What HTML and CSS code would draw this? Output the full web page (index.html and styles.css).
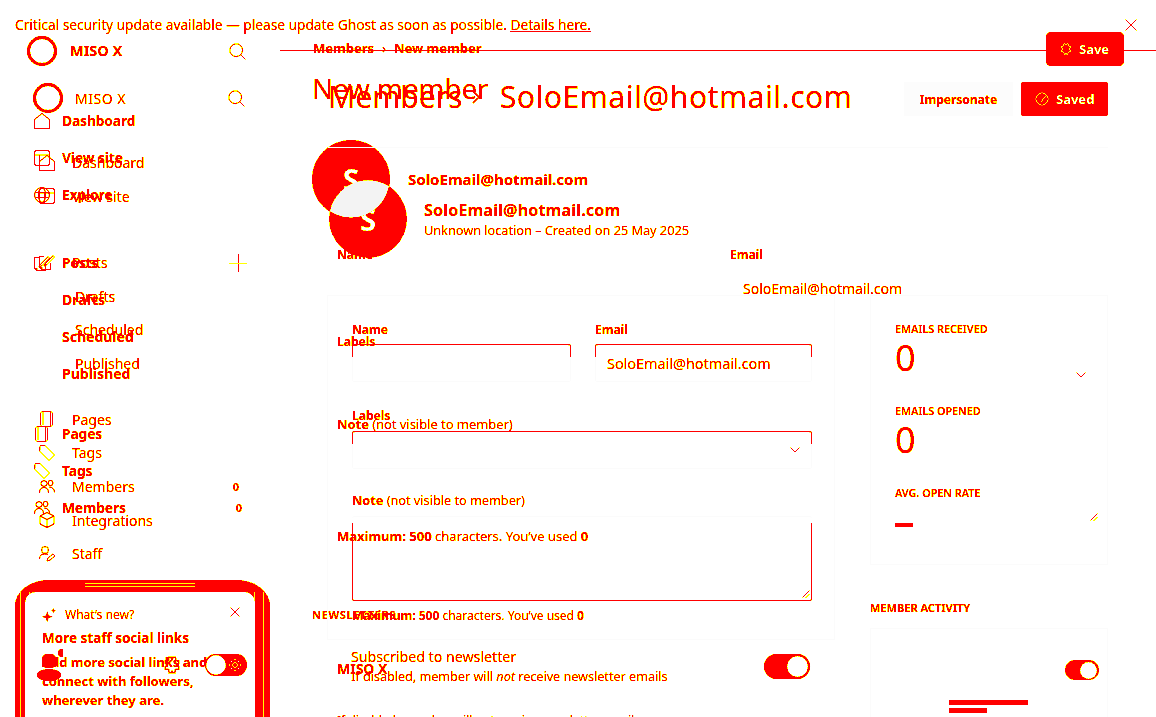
FILE: index.html
```html
<!DOCTYPE html>
<html lang="en">
<head>
<meta charset="utf-8">
<title>Members - SoloEmail@hotmail.com</title>
<link rel="stylesheet" href="styles.css">
</head>
<body>
<svg class="defs" aria-hidden="true">
  <filter id="ink" color-interpolation-filters="sRGB" x="0" y="0" width="100%" height="100%">
    <feComponentTransfer>
      <feFuncR type="table" tableValues="1 1 1 1 1 1 1 1 1 1 1 1 1 1 1 .9375 1"/>
      <feFuncG type="table" tableValues="0 0 0 0 0 0 0 0 1 1 1 1 1 1 1 .9375 1"/>
      <feFuncB type="table" tableValues="0 0 0 0 0 0 0 0 0 0 0 0 0 0 0 .9375 1"/>
    </feComponentTransfer>
  </filter>
  <symbol id="i-house" viewBox="0 0 16 16"><path d="M.5 6.500 8 .5l7.500 6v9H.5z"/></symbol>
  <symbol id="i-window" viewBox="0 0 16 16"><rect x=".5" y=".5" width="15" height="15" rx="2"/><path d="M.5 5h15M5.500 5v10"/></symbol>
  <symbol id="i-globe" viewBox="0 0 16 16"><circle cx="8" cy="8" r="7.500"/><ellipse cx="8" cy="8" rx="3.500" ry="7.500"/><path d="M1 5.500h14M1 10.500h14"/></symbol>
  <symbol id="i-posts" viewBox="0 0 16 16"><path d="M5 2.500H.5v11l2.500 2h8.500V9M3 15.500v-2H.5"/><path d="m6 10 8-8.500 1.500 1.500-8 8-2.500 1z"/></symbol>
  <symbol id="i-page" viewBox="0 0 16 16"><path d="M3 .5h9l1.500 1.500v12l-1.500 1.500H3L1.500 14V2zM4 .5v13.500M11.500.5v15"/></symbol>
  <symbol id="i-tag" viewBox="0 0 16 16"><path d="M1 1.500 1.500 .5H6l9.500 9.500-5.500 5.500L.5 6z"/></symbol>
  <symbol id="i-people" viewBox="0 0 16 14"><circle cx="5" cy="3.500" r="3"/><circle cx="11.500" cy="3" r="2.500"/><path d="M.5 13c0-4 2-5.500 4.500-5.500S9.500 9 9.500 13M10 7c3 0 5.500 1.500 5.500 5.500"/></symbol>
  <symbol id="i-cube" viewBox="0 0 16 16"><path d="m8 .5 7 3.500v8l-7 3.500L1 12V4zM1 4l7 3.500L15 4M8 7.500v8"/></symbol>
  <symbol id="i-staff" viewBox="0 0 16 16"><circle cx="6" cy="4" r="3.500"/><path d="M.5 13c0-4 2.500-5 5.500-5 1 0 2 .2 3 .6M8 15l1-3 5-4 2 2-5 4z"/></symbol>
  <symbol id="i-search" viewBox="0 0 20 20"><circle cx="8.500" cy="8.500" r="7.500"/><path d="m14 14 5.500 5.500"/></symbol>
  <symbol id="i-check" viewBox="0 0 16 16"><circle cx="8" cy="8" r="7"/><path d="m4.500 8.500 2.500 2.500 5-6"/></symbol>
  <symbol id="i-gear" viewBox="0 0 16 16"><path d="M5 1h2l1 2 1-2h2l.5 3 2.500.5v2l-2 1.500 2 1.500v2L11 12l-.5 3h-2L8 13l-.5 2h-2L5 12l-3-.5v-2L4 8 2 6.500v-2L5 4z"/></symbol>
  <symbol id="i-spark" viewBox="0 0 16 16"><path class="solid" d="m6 4 1.500 4.500L12 10l-4.500 1.500L6 16l-1.500-4.500L0 10l4.500-1.500zM13 0l.8 2.200L16 3l-2.200.8L13 6l-.8-2.200L10 3l2.200-.8z"/></symbol>
</svg>

<div class="stage">

  <!-- first exposure: new member screen -->
  <div class="layer layer-a">
    <div class="banner">
      <p>Critical security update available — please update Ghost as soon as possible. <a href="#">Details here.</a></p>
      <svg class="close" viewBox="0 0 12 12"><path d="m.5.500 11 11M11.500.500l-11 11"/></svg>
    </div>
    <div class="a-body">
      <aside class="a-side">
        <div class="a-brand"><span class="ring"></span><b>MISO X</b><svg class="search"><use href="#i-search"/></svg></div>
        <nav class="a-nav">
          <a class="a-row"><svg class="ic"><use href="#i-house"/></svg>Dashboard</a>
          <a class="a-row"><svg class="ic"><use href="#i-window"/></svg>View site</a>
          <a class="a-row"><svg class="ic"><use href="#i-globe"/></svg>Explore</a>
        </nav>
        <nav class="a-nav a-posts">
          <a class="a-row"><svg class="ic"><use href="#i-posts"/></svg>Posts<i class="plus"></i></a>
          <a class="a-row sub">Drafts</a>
          <a class="a-row sub">Scheduled</a>
          <a class="a-row sub">Published</a>
        </nav>
        <nav class="a-nav a-pages">
          <a class="a-row"><svg class="ic"><use href="#i-page"/></svg>Pages</a>
          <a class="a-row"><svg class="ic"><use href="#i-tag"/></svg>Tags</a>
          <a class="a-row"><svg class="ic ic-p"><use href="#i-people"/></svg>Members<span class="count">0</span></a>
        </nav>
        <div class="a-foot">
          <div class="frame">
            <section class="news">
              <header><svg class="spark"><use href="#i-spark"/></svg><span>What’s new?</span><svg class="x" viewBox="0 0 12 12"><path d="m1 1 10 10M11 1 1 11"/></svg></header>
              <h3>More staff social links</h3>
              <p>Add more social links and connect with followers, wherever they are.</p>
            </section>
          </div>
          <div class="tools">
            <svg class="me" viewBox="0 0 26 32"><circle class="solid" cx="25" cy="4" r="4"/><rect class="solid" x="5" y="5" width="14" height="14" rx="5"/><ellipse class="solid" cx="12" cy="26" rx="12" ry="6"/></svg>
            <svg class="gear"><use href="#i-gear"/></svg>
            <span class="mode"><i></i><svg viewBox="0 0 12 12"><circle cx="6" cy="6" r="2.500"/><path d="M6 0v1.500M6 10.500V12M0 6h1.500M10.500 6H12M2 2l1 1M9 9l1 1M10 2 9 3M3 9l-1 1"/></svg></span>
          </div>
        </div>
      </aside>
      <main class="a-main">
        <header class="a-head">
          <div class="crumb"><b>Members</b><span>›</span><b>New member</b></div>
          <button class="a-save"><svg><use href="#i-gear"/></svg>Save</button>
        </header>
        <h1 class="a-title">New member</h1>
        <div class="a-who"><div class="av av-a"><i class="lens"></i><span>S</span></div><strong>SoloEmail@hotmail.com</strong></div>
        <div class="a-cols">
          <div class="a-form">
            <div class="a-pair">
              <b>Name</b>
              <div><b>Email</b><p>SoloEmail@hotmail.com</p></div>
            </div>
            <div class="a-labels"><b>Labels</b><svg class="chev" viewBox="0 0 10 6"><path d="m.5.500 4.500 4.500L9.500.500"/></svg></div>
            <div class="a-note"><label><b>Note</b> (not visible to member)</label><svg class="grip" viewBox="0 0 8 8"><path d="M.5 7.500l7-7M4 7.500 7.500 4"/></svg></div>
            <div class="a-max"><b>Maximum: 500</b> characters. You’ve used <b>0</b></div>
            <div class="a-news">
              <h4>NEWSLETTERS</h4>
              <div class="a-brandline">MISO X</div>
              <div class="a-clip">If disabled, member will not receive newsletter emails</div>
            </div>
          </div>
          <div class="a-act">
            <h4>MEMBER ACTIVITY</h4>
            <div class="a-sw"><span class="sw sw-a"><i></i></span></div>
            <div class="skel"><i></i><i></i></div>
          </div>
        </div>
      </main>
    </div>
  </div>

  <!-- second exposure: member detail screen -->
  <div class="layer layer-b">
    <aside class="b-side">
      <div class="b-brand"><span class="ring"></span><span>MISO X</span><svg class="search"><use href="#i-search"/></svg></div>
      <nav class="b-nav">
        <a class="b-row"><svg class="ic"><use href="#i-house"/></svg>Dashboard</a>
        <a class="b-row"><svg class="ic"><use href="#i-window"/></svg>View site</a>
      </nav>
      <nav class="b-nav b-posts">
        <a class="b-row"><svg class="ic"><use href="#i-posts"/></svg>Posts</a>
        <a class="b-row sub">Drafts</a>
        <a class="b-row sub">Scheduled</a>
        <a class="b-row sub">Published</a>
      </nav>
      <nav class="b-nav b-pages">
        <a class="b-row"><svg class="ic"><use href="#i-page"/></svg>Pages</a>
        <a class="b-row"><svg class="ic"><use href="#i-tag"/></svg>Tags</a>
        <a class="b-row"><svg class="ic ic-p"><use href="#i-people"/></svg>Members<span class="count">0</span></a>
        <a class="b-row"><svg class="ic"><use href="#i-cube"/></svg>Integrations</a>
        <a class="b-row"><svg class="ic"><use href="#i-staff"/></svg>Staff</a>
      </nav>
    </aside>
    <main class="b-main">
      <header class="b-head">
        <h1><span>Members</span><svg class="gt" viewBox="0 0 8 14"><path d="m1 1 6 6-6 6"/></svg><span class="b-addr">SoloEmail@hotmail.com</span></h1>
        <div class="b-actions">
          <button class="imp">Impersonate</button>
          <button class="saved"><svg><use href="#i-check"/></svg>Saved</button>
        </div>
      </header>
      <div class="b-rule"></div>
      <div class="b-who">
        <div class="av av-b">S</div>
        <div><strong>SoloEmail@hotmail.com</strong><p>Unknown location – Created on 25 May 2025</p></div>
      </div>
      <div class="b-cols">
        <div class="b-left">
          <section class="b-card">
            <div class="b-pair">
              <div class="fld"><label>Name</label><div class="inp"></div></div>
              <div class="fld"><label>Email</label><div class="inp">SoloEmail@hotmail.com</div></div>
            </div>
            <div class="fld b-lab"><label>Labels</label><div class="inp inp-sel"><svg class="chev" viewBox="0 0 10 6"><path d="m.5.500 4.500 4.500L9.500.500"/></svg></div></div>
            <div class="fld b-nt"><label><b>Note</b> (not visible to member)</label><div class="area"><svg class="grip" viewBox="0 0 8 8"><path d="M.5 7.500l7-7M4 7.500 7.500 4"/></svg></div></div>
            <p class="hint"><b>Maximum: 500</b> characters. You’ve used <b>0</b></p>
          </section>
          <section class="b-sub">
            <div><strong>Subscribed to newsletter</strong><p>If disabled, member will <em>not</em> receive newsletter emails</p></div>
            <span class="sw"><i></i></span>
          </section>
        </div>
        <div class="b-right">
          <section class="stats">
            <h5>EMAILS RECEIVED</h5><div class="num">0</div>
            <h5>EMAILS OPENED</h5><div class="num">0</div>
            <h5>AVG. OPEN RATE</h5><div class="dash"></div>
          </section>
          <section class="activity"></section>
        </div>
      </div>
    </main>
  </div>
</div>
</body>
</html>
```
FILE: styles.css
```css
* { box-sizing: border-box; }
html, body { margin: 0; height: 100%; background: #fff; overflow: hidden; }
body { font-family: "Noto Sans", sans-serif; color: #000; }
.defs { display: block; width: 0; height: 0; overflow: hidden; }
p, h1, h3, h4, h5 { margin: 0; font-weight: inherit; }
a { color: inherit; text-decoration: none; }
button { font: inherit; border: 0; padding: 0; }
svg { display: block; fill: none; stroke: #000; stroke-width: 1; }
.solid { fill: #000; stroke: none; }
b, strong { font-weight: 700; }

.stage { display: grid; width: 1156px; height: 717px; overflow: hidden; background: #fff; filter: url(#ink); }
.layer { grid-area: 1 / 1; min-width: 0; height: 717px; overflow: hidden; }

/* shared */
.ring { display: block; width: 30px; height: 30px; border-radius: 50%; border: 3.500px solid #000; }
.search { width: 17px; height: 17px; margin-left: auto; }
.ic { width: 16px; height: 16px; flex: none; }
.ic-p { height: 14px; }
.count { margin-left: auto; margin-right: 4px; font-size: 11px; font-weight: 700; }
.chev { width: 10px; height: 6px; flex: none; }
.grip { width: 8px; height: 8px; flex: none; }
.av { width: 78px; height: 78px; border-radius: 50%; background: #000; color: #fff; display: grid; place-items: center; font-size: 30px; font-weight: 700; flex: none; overflow: hidden; }
.sw { display: flex; justify-content: flex-end; align-items: center; width: 46px; height: 25px; padding: 2px; border-radius: 13px; background: #000; }
.sw i { display: block; width: 21px; height: 21px; border-radius: 50%; background: #fff; }

/* layer A */
.banner { display: flex; align-items: center; justify-content: space-between; height: 36px; padding: 13px 19px 0 15px; font-size: 13.700px; }
.banner a { text-decoration: underline; }
.close { width: 12px; height: 12px; }
.a-body { display: flex; }
.a-side { width: 280px; flex: none; padding: 0 34px 0 0; }
.a-brand { display: flex; align-items: center; height: 30px; padding-left: 27px; font-size: 14.500px; }
.a-brand b { margin: -3px 0 0 13px; }
.a-nav { padding-left: 34px; }
.a-nav:first-of-type { margin-top: 36px; }
.a-row { display: flex; align-items: center; gap: 12px; height: 37px; font-size: 13.600px; font-weight: 700; }
.a-row.sub { padding-left: 28px; font-size: 14px; }
.a-posts { margin-top: 31px; }
.a-pages { margin-top: 23px; }
.plus { position: relative; display: block; width: 16px; height: 16px; margin-left: auto; }
.plus::before, .plus::after { content: ""; position: absolute; background: #000; }
.plus::before { left: 8px; top: -1px; width: 1px; height: 18px; }
.plus::after { left: -1px; top: 8px; width: 18px; height: 1px; background: #888; }
.a-foot { display: grid; margin-top: 53px; margin-right: -34px; }
.a-foot > * { grid-area: 1 / 1; }
.frame { width: 255px; height: 200px; margin: 1px 0 0 15px; padding: 12px 14px 0 10px; border-radius: 34px 34px 0 0 / 26px 26px 0 0;
  background:
    linear-gradient(#000 0 3px, #888 3px 4px, #000 4px 6px, #888 6px 7px, #000 7px 12px) 70px 0 / 110px 12px no-repeat,
    linear-gradient(#000, #000) 0 0 / 100% 12px no-repeat,
    repeating-linear-gradient(90deg, #000 0 5px, #888 5px 6px, #000 6px 9px); }
.news { width: 230px; height: 200px; padding: 14px 17px; background: #fff; border-radius: 10px 10px 0 0; font-size: 13px; font-weight: 700; }
.news header { display: flex; align-items: center; gap: 9px; font-weight: 400; font-size: 12px; }
.news .spark { width: 14px; height: 14px; }
.news .x { width: 10px; height: 10px; margin: -5px -2px 0 auto; }
.news h3 { margin-top: 6px; font-size: 13.500px; }
.news p { margin-top: 6px; line-height: 19px; width: 175px; }
.tools { display: flex; align-items: center; height: 30px; margin-top: 71px; padding-left: 37px; }
.me { width: 26px; height: 32px; }
.gear { width: 18px; height: 18px; margin-left: 100px; }
.mode { display: flex; align-items: center; justify-content: space-between; width: 42px; height: 22px; margin-left: 24px; padding: 1px 6px 1px 1px; border-radius: 11px; background: #000; }
.mode i { display: block; width: 20px; height: 20px; border-radius: 50%; background: #fff; }
.mode svg { width: 12px; height: 12px; stroke: #fff; }
.a-main { flex: 1; min-width: 0; }
.a-head { display: flex; align-items: flex-end; justify-content: space-between; height: 15px; border-bottom: 1px solid #000; padding: 0 32px 0 33px; font-size: 13px; }
.crumb { display: flex; gap: 8px; margin-bottom: -7px; }
.a-save { display: flex; align-items: center; gap: 7px; width: 78px; height: 34px; margin-bottom: -16px; padding-left: 14px; border-radius: 5px; background: #000; color: #fff; font-size: 13px; font-weight: 700; }
.a-save svg { width: 12px; height: 12px; stroke: #fff; }
.a-title { margin: 18px 0 0 32px; font-size: 27.700px; line-height: 38px; }
.a-who { display: flex; align-items: center; gap: 18px; margin: 33px 0 0 32px; font-size: 15px; }
.av-a { text-shadow: 0 0 1px #000; }
.av-a > * { grid-area: 1 / 1; }
.lens { display: block; width: 100%; height: 100%; background: #f3f3f3; clip-path: circle(39px at 56px 79px); }
.a-cols { display: flex; padding-left: 57px; }
.a-form { width: 533px; flex: none; font-size: 12px; }
.a-pair { display: flex; justify-content: space-between; padding: 28px 0 0; height: 115px; }
.a-pair > b { display: block; }
.a-pair > div { width: 140px; }
.a-pair p { margin: 16px 0 0 13px; font-size: 14px; }
.a-labels { display: flex; justify-content: space-between; align-items: flex-start; width: 749px; height: 82px; }
.a-labels .chev { margin-top: 39px; }
.a-note { display: flex; justify-content: space-between; align-items: flex-start; width: 761px; height: 112px; font-size: 12.900px; }
.a-note .grip { margin-top: 98px; }
.a-max { font-size: 13px; }
.a-news { margin-left: -25px; padding-top: 62px; }
.a-news h4 { font-size: 11px; font-weight: 700; letter-spacing: .7px; }
.a-brandline { margin: 37px 0 0 25px; font-size: 14px; font-weight: 700; }
.a-clip { margin: 34px 0 0 25px; font-size: 12px; }
.a-act { width: 238px; flex: none; padding-top: 382px; }
.a-act h4 { font-size: 11px; font-weight: 700; }
.a-sw { display: flex; justify-content: flex-end; margin-top: 45px; padding-right: 9px; }
.sw-a { width: 34px; height: 20px; }
.sw-a i { width: 17px; height: 17px; }
.skel { margin: 20px 0 0 79px; }
.skel i { display: block; height: 5px; background: #000; margin-bottom: 3px; }
.skel i:first-child { width: 79px; }
.skel i:last-child { width: 38px; }

/* layer B */
.layer-b { display: flex; }
.b-side { width: 280px; flex: none; padding: 0 0 0 39px; }
.b-brand { display: flex; align-items: center; height: 32px; margin-top: 82px; margin-left: -6px; padding-right: 35px; font-size: 14px; letter-spacing: .5px; }
.b-brand > span:nth-child(2) { margin-left: 12px; }
.b-nav { padding-right: 37px; }
.b-brand + .b-nav { margin-top: 32px; }
.b-row { display: flex; align-items: center; gap: 17px; height: 33.600px; font-size: 14px; }
.b-row.sub { padding-left: 36px; }
.b-posts { margin-top: 32.500px; }
.b-pages { margin-top: 22.500px; }
.b-main { flex: 1; min-width: 0; padding-right: 48px; }
.b-head { display: flex; align-items: center; justify-content: space-between; height: 34px; margin-top: 82px; padding-left: 48px; }
.b-head h1 { display: flex; align-items: center; gap: 10px; margin-top: -5px; font-size: 30px; }
.b-addr { margin-left: 9.500px; letter-spacing: .55px; }
.gt { width: 8px; height: 14px; stroke-width: 1.500; }
.b-actions { display: flex; gap: 8px; }
.imp { width: 109px; height: 34px; background: #fcfcfc; font-size: 12px; font-weight: 700; }
.saved { display: flex; align-items: center; gap: 7px; width: 87px; height: 34px; padding-left: 14px; border-radius: 3px; background: #000; color: #fff; font-size: 13px; font-weight: 700; }
.saved svg { width: 14px; height: 14px; stroke: #fff; }
.b-rule { height: 1px; margin: 31px 0 0 48px; background: #fbfbfb; }
.b-who { display: flex; align-items: center; gap: 17px; margin: 32px 0 0 49px; }
.av-b { mask-image: radial-gradient(circle 39px at 22px -1px, transparent 98%, #000 100%); }
.b-who strong { font-size: 16px; letter-spacing: .2px; }
.b-who p { font-size: 12.700px; }
.b-cols { display: flex; gap: 35px; margin-top: 37px; padding-left: 47px; }
.b-left { width: 508px; flex: none; }
.b-card { padding: 25px 22px 24px 24px; height: 345px; border: 1px solid #fbfbfb; font-size: 12px; font-weight: 700; }
.fld label { display: block; font-weight: 700; }
.b-nt label { font-weight: 400; font-size: 12.700px; }
.b-pair { display: grid; grid-template-columns: 219px 217px; gap: 24px; }
.inp { display: flex; align-items: center; justify-content: flex-end; height: 38px; margin-top: 6px; padding: 0 12px; border-top: 1px solid #000; border-bottom: 1px solid #fbfbfb; border-radius: 3px; font-size: 14.400px; font-weight: 400;
  background: linear-gradient(#000, #000) left top / 1px 12px no-repeat, linear-gradient(#000, #000) right top / 1px 12px no-repeat, linear-gradient(#fbfbfb, #fbfbfb) left top / 1px 100% no-repeat, linear-gradient(#fbfbfb, #fbfbfb) right top / 1px 100% no-repeat; }
.b-pair .fld:last-child .inp { justify-content: flex-start; }
.inp-sel { margin-top: 7px; }
.b-lab { margin-top: 25px; }
.b-nt { margin-top: 22px; }
.area { display: flex; align-items: flex-end; justify-content: flex-end; height: 85px; margin-top: 7px; padding: 2px; border-top: 1px solid #fbfbfb; border-bottom: 1px solid #000; border-radius: 3px;
  background: linear-gradient(#000, #000) left 6px / 1px 100% no-repeat, linear-gradient(#000, #000) right 6px / 1px 100% no-repeat; }
.hint { margin-top: 6px; font-weight: 400; font-size: 12px; }
.b-sub { display: flex; justify-content: space-between; align-items: center; padding: 0 25px 0 24px; margin-top: 7px; font-size: 12.600px; }
.b-sub strong { font-size: 14.200px; font-weight: 400; }
.b-sub p { margin-top: 2px; }
.b-right { width: 238px; flex: none; }
.stats { height: 270px; padding: 26px 24px; border: 1px solid #fbfbfb; }
.stats h5 { font-size: 10.800px; font-weight: 600; line-height: 14px; }
.num { height: 68px; font-size: 36px; line-height: 44px; }
.dash { width: 18px; height: 4px; margin-top: 23px; background: #000; }
.activity { height: 200px; margin-top: 63px; border: 1px solid #fbfbfb; }
```
